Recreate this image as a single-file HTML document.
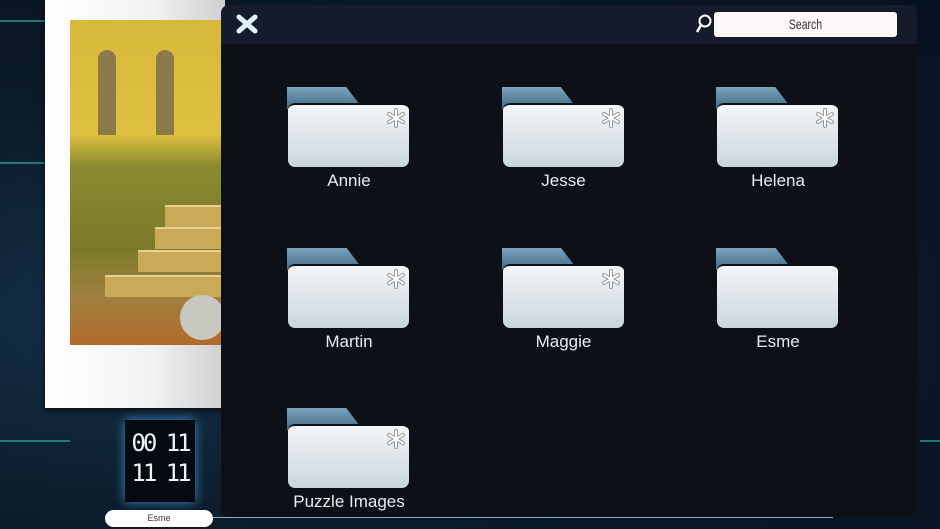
<!DOCTYPE html>
<html><head><style>
*{margin:0;padding:0;box-sizing:border-box}
body{width:940px;height:529px;overflow:hidden;background:#0b1a28;position:relative;font-family:"Liberation Sans",sans-serif}
.bg{position:absolute;inset:0;background:radial-gradient(ellipse at 20% 60%,#15324a 0%,#0b1a28 50%,#071220 100%)}
.line{position:absolute;background:#2fb5a8;opacity:.6}
.card{position:absolute;left:45px;top:0;width:180px;height:408px;background:linear-gradient(90deg,#fff 0%,#f2f2f2 60%,#cfcfcf 100%);box-shadow:0 3px 6px rgba(0,0,0,.6)}
.pic{position:absolute;left:70px;top:20px;width:155px;height:325px;background:linear-gradient(180deg,#d8b83a 0%,#e0c040 35%,#8a8a30 45%,#7a7a2a 70%,#a08040 85%,#b06a2a 100%)}
.win{position:absolute;top:30px;width:18px;height:85px;border-radius:9px 9px 0 0;background:#8a7a4a}
.step{position:absolute;background:#c8aa58;border-top:2px solid #e8d090;height:22px}
.panel{position:absolute;left:221px;top:5px;width:696px;height:512px;background:#0e1017;border-radius:8px;overflow:hidden}
.head{height:39px;background:#161b2c;position:relative}
.search{position:absolute;left:493px;top:7px;width:183px;height:25px;background:#fdf8f8;border-radius:3px}
.search span{display:block;font-size:14px;color:#333;text-align:center;line-height:25px;transform:scaleX(.75)}
.folder{position:absolute;width:124px;height:100px}
.tab{position:absolute;left:0;top:0;width:76px;height:22px;background:linear-gradient(#7aa3bc,#3f6a86);clip-path:polygon(0 0,78% 0,100% 100%,0 100%)}
.fb{position:absolute;left:1px;top:16px;width:121px;height:64px;border-radius:7px;background:linear-gradient(#f4f6f8,#c9d6dd);border-top:2px solid #0e1017}
.star{position:absolute;right:3px;top:3px}
.lbl{position:absolute;left:-40px;width:204px;top:84px;text-align:center;color:#e8ecf2;font-size:17px}
</style></head><body>
<div class="bg"></div>
<div class="line" style="left:0;top:20px;width:45px;height:2px"></div>
<div class="line" style="left:0;top:162px;width:45px;height:2px"></div>
<div class="line" style="left:0;top:440px;width:70px;height:2px"></div>
<div class="line" style="left:920px;top:440px;width:20px;height:2px"></div>
<div class="card"></div>
<div class="pic">
<div class="win" style="left:28px"></div><div class="win" style="left:86px"></div>
<div class="step" style="left:95px;top:185px;width:60px"></div>
<div class="step" style="left:85px;top:207px;width:70px"></div>
<div class="step" style="left:68px;top:230px;width:87px"></div>
<div class="step" style="left:35px;top:255px;width:120px"></div>
<div style="position:absolute;left:110px;top:275px;width:45px;height:45px;border-radius:50%;background:#c8c8c0"></div>
</div>
<div style="position:absolute;left:125px;top:420px;width:70px;height:82px;background:#050a10;box-shadow:0 0 10px #3a8ad0;color:#e8f4ff;font-family:'DejaVu Sans Mono',monospace;font-size:24px;line-height:30px;text-align:center;padding-top:8px;letter-spacing:-3px">00 11<br>11 11</div>
<div style="position:absolute;left:105px;top:510px;width:108px;height:17px;background:#fff;border-radius:9px;font-size:9px;color:#334;text-align:center;line-height:17px">Esme</div>
<div style="position:absolute;left:213px;top:517px;width:620px;height:1px;background:#8ab"></div>
<div class="panel">
<div class="head">
<svg style="position:absolute;left:14px;top:9px" width="24" height="20" viewBox="0 0 24 20"><path d="M4 3L20 17M20 3L4 17" stroke="#dff6ff" stroke-width="5" stroke-linecap="round"/></svg>
<svg style="position:absolute;left:474px;top:8px" width="18" height="22" viewBox="0 0 18 22"><circle cx="10" cy="8" r="5.5" fill="none" stroke="#fff" stroke-width="2"/><path d="M6 12L2 19" stroke="#fff" stroke-width="2.5"/></svg>
<div class="search"><span>Search</span></div></div>
</div>
<div id="f"></div>
<script>
var n=["Annie","Jesse","Helena","Martin","Maggie","Esme","Puzzle Images"],s=[1,1,1,1,1,0,1],h="";
var st='<svg class="star" width="20" height="20" viewBox="0 0 20 20"><g stroke="#999" stroke-width="4" stroke-linecap="round"><path d="M10 2V18M3 6L17 14M17 6L3 14"/></g><g stroke="#fff" stroke-width="2" stroke-linecap="round"><path d="M10 2V18M3 6L17 14M17 6L3 14"/></g></svg>';
for(var i=0;i<7;i++){var x=287+(i%3)*214.5,y=87+Math.floor(i/3)*160.5;
h+='<div class="folder" style="left:'+x+'px;top:'+y+'px"><div class="tab"></div><div class="fb">'+(s[i]?st:'')+'</div><div class="lbl">'+n[i]+'</div></div>';}
document.getElementById("f").innerHTML=h;
</script>
</body></html>
